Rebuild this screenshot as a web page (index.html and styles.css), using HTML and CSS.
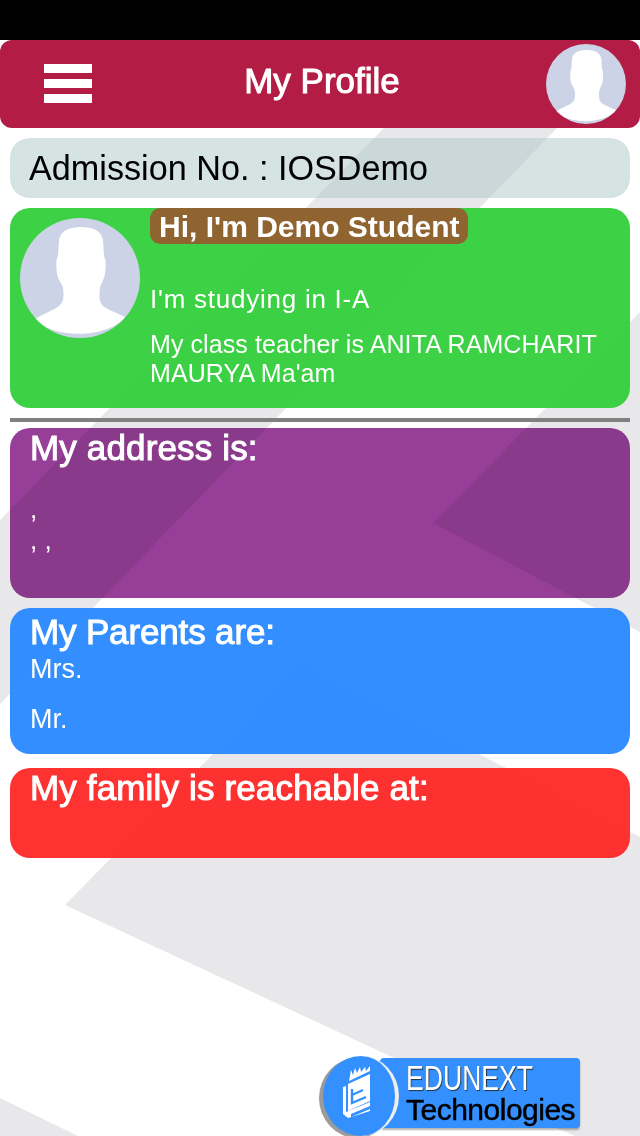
FILE: index.html
```html
<!DOCTYPE html>
<html lang="en">
<head>
    <meta charset="UTF-8">
    <meta name="viewport" content="width=device-width, initial-scale=1.0">
    <title>My Profile</title>
    <link rel="stylesheet" href="styles.css">
</head>
<body>
    <!-- grey shapes behind everything -->
    <svg class="page-bg" viewBox="0 0 640 1136" aria-hidden="true">
        <polygon points="384,128 557,128 0,704 0,520"/>
        <polygon points="433,523 640,312 640,632"/>
        <polygon points="302,663 640,837 640,1136 575,1136 392,1057 65,905"/>
        <polygon points="0,1098 78,1136 0,1136"/>
    </svg>

    <svg class="defs" aria-hidden="true">
        <symbol id="avatar" viewBox="0 0 120 120">
            <rect width="120" height="120" fill="#ccd3e6"/>
            <path fill="#fff" d="M61 9C50 9 41 12 39 22L38 38C36 41 36 48 37 56C38 62 42 65 43 70C44 78 44 84 39 88C34 92 25 95 15 101C32 121 88 121 105 99C97 95 88 92 83 88C79 84 79 78 80 70C81 65 84 62 85 56C86 48 86 41 84 38L83 22C81 12 72 9 61 9Z"/>
        </symbol>
    </svg>

    <div class="status-bar"></div>

    <header class="topbar">
        <div class="menu-icon"><span></span><span></span><span></span></div>
        <h1>My Profile</h1>
        <svg class="avatar avatar-small"><use href="#avatar"/></svg>
    </header>

    <main class="content">
        <div class="card card-admission">Admission No. : IOSDemo</div>

        <section class="card card-student">
            <svg class="avatar avatar-large"><use href="#avatar"/></svg>
            <div class="student-info">
                <h2 class="student-name">Hi, I'm Demo Student</h2>
                <p class="student-class">I'm studying in I-A</p>
                <p class="student-teacher">My class teacher is ANITA RAMCHARIT MAURYA Ma'am</p>
            </div>
        </section>

        <hr class="divider">

        <section class="card card-address">
            <h3>My address is:</h3>
            <p class="address-line">,</p>
            <p class="address-line">, ,</p>
        </section>

        <section class="card card-parents">
            <h3>My Parents are:</h3>
            <p>Mrs.</p>
            <p class="parent-second">Mr.</p>
        </section>

        <section class="card card-contact">
            <h3>My family is reachable at:</h3>
        </section>
    </main>

    <footer class="footer">
        <div class="logo">
            <div class="logo-circle">
                <svg width="28" height="54" viewBox="0 0 28 54">
                    <path fill="#fff" d="M6 17L8 6L10 11L12 4L14 9L17 3L18 8L22 3L23 7L27 2L27 7L6 17Z"/>
                    <path fill="#fff" d="M5 20L27 10L27 37L5 47ZM0 23L3 22L3 48L27 38L27 42L8 50L8 53L27 45L27 47L5 54L0 50Z"/>
                    <path fill="none" stroke="#3490fe" stroke-width="2.4" d="M9 25V39L23 33M9 31L20 26"/>
                </svg>
            </div>
            <div class="logo-text">
                <span class="logo-top">EDUNEXT</span>
                <span class="logo-bottom">Technologies</span>
            </div>
        </div>
    </footer>
</body>
</html>
```

FILE: styles.css
```css
* { box-sizing: border-box; }
body { margin: 0; width: 640px; height: 1136px; position: relative; overflow: hidden; display: flex; flex-direction: column; background-color: #fff; font-family: "Liberation Sans", Arial, sans-serif; color: #fff; }
h1, h2, h3, p { margin: 0; }

.page-bg { position: absolute; top: 0; left: 0; width: 640px; height: 1136px; z-index: -1; fill: #e8e8ea; }
.defs { position: absolute; width: 0; height: 0; }

.status-bar { height: 40px; background-color: #000; }

.topbar { height: 88px; display: flex; align-items: center; padding: 0 14px 0 44px; background-color: #b31d45; border-radius: 12px; }
.topbar h1 { flex: 1; margin: -6px 0 0 6px; text-align: center; font-size: 35px; font-weight: normal; -webkit-text-stroke: 1px #fff; }
.menu-icon { width: 48px; margin-top: -1px; display: flex; flex-direction: column; gap: 6px; }
.menu-icon span { height: 9px; background-color: #fff; }

.avatar { display: block; flex: none; border-radius: 50%; }
.avatar-small { width: 80px; height: 80px; }
.avatar-large { width: 120px; height: 120px; }

.content { padding: 10px; display: flex; flex-direction: column; }
.card { position: relative; border-radius: 20px; padding: 0 20px; }
.card h3 { position: relative; font-size: 35px; line-height: 40px; font-weight: normal; letter-spacing: 0.15px; -webkit-text-stroke: 1px #fff; }
.card p { position: relative; font-size: 26px; line-height: 30px; }

.card-admission { height: 60px; padding-left: 19px; line-height: 60px; font-size: 34.2px; color: #000; background-color: rgba(171, 199, 199, 0.5); }

.card-student { height: 200px; margin-top: 10px; padding: 10px 10px 0; display: flex; gap: 10px; background-color: rgba(45, 205, 54, 0.92); }
.student-info { flex: 1; margin-top: -10px; }
.student-name { display: inline-block; height: 36px; line-height: 37px; padding: 0 9px; font-size: 30px; background-color: #8f6430; border-radius: 10px; }
.card .student-class { margin-top: 40px; letter-spacing: 0.75px; }
.card .student-teacher { margin-top: 16px; font-size: 25px; line-height: 29px; letter-spacing: 0.08px; }

.divider { height: 4px; width: 100%; margin: 10px 0 6px; border: 0; background-color: #808080; }

/* purple darkens over the grey shapes, so blend only the fill and not the text */
.card-address { height: 170px; }
.card-address::before { content: ""; position: absolute; inset: 0; border-radius: 20px; background-color: #973f98; mix-blend-mode: multiply; }
.card .address-line { line-height: 31px; }
.address-line:first-of-type { margin-top: 26px; }

.card-parents { height: 146px; margin-top: 10px; padding-top: 4px; background-color: rgba(34, 134, 255, 0.92); }
.card-parents h3 { margin-bottom: 2px; letter-spacing: -0.15px; }
.card-parents p { font-size: 27px; }
.card .parent-second { margin-top: 20px; }

.card-contact { height: 90px; margin-top: 14px; background-color: rgba(255, 33, 33, 0.92); }

.footer { margin-top: auto; height: 86px; display: flex; justify-content: flex-end; padding-right: 60px; }
.logo { position: relative; width: 260px; height: 86px; }
.logo-text { position: absolute; left: 60px; top: 8px; width: 200px; height: 70px; padding: 3px 0 0 26px; background-color: #3490fe; border-radius: 4px; box-shadow: 0 2px 2px rgba(0, 0, 0, 0.3); display: flex; flex-direction: column; }
.logo-top { font-size: 35px; line-height: 34px; color: #fff; text-shadow: 1px 1px 1px #234; transform: scaleX(0.76); transform-origin: left; white-space: nowrap; }
.logo-bottom { font-size: 30px; line-height: 30px; color: #000; letter-spacing: -0.5px; -webkit-text-stroke: 0.5px #000; white-space: nowrap; }
.logo-circle { position: absolute; z-index: 1; left: 3px; top: 6px; width: 76px; height: 80px; padding: 0 4px 10px 0; border-radius: 50%; background-color: #3490fe; border-right: 4px solid #eee; box-shadow: -4px 2px 0 #9b9b9b; display: flex; align-items: center; justify-content: center; }
```
